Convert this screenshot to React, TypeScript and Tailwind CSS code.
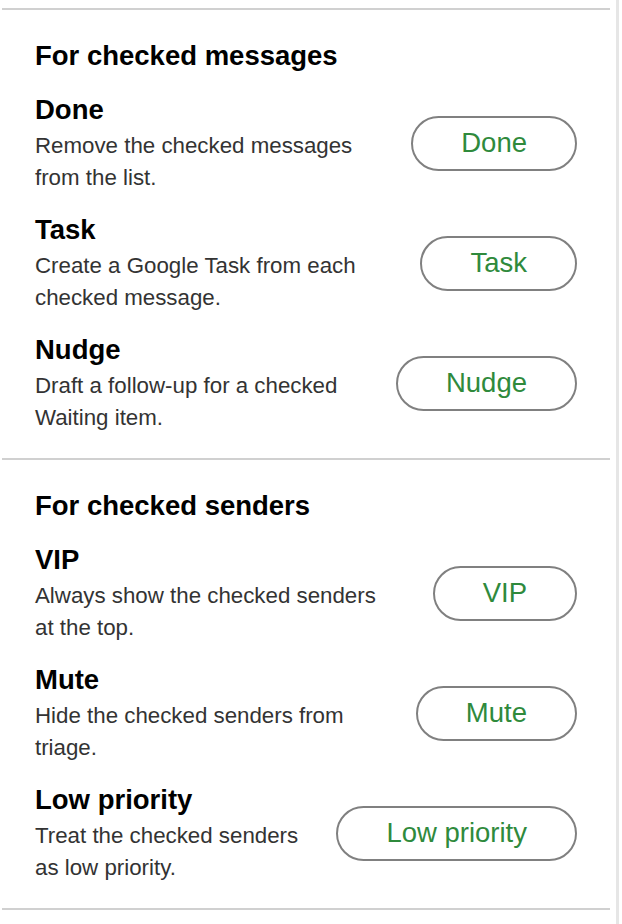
import React from 'react';

type Action = {
  title: string;
  description: string;
  label: string;
};

const messageActions: Action[] = [
  { title: 'Done', description: 'Remove the checked messages from the list.', label: 'Done' },
  { title: 'Task', description: 'Create a Google Task from each checked message.', label: 'Task' },
  { title: 'Nudge', description: 'Draft a follow-up for a checked Waiting item.', label: 'Nudge' },
];

const senderActions: Action[] = [
  { title: 'VIP', description: 'Always show the checked senders at the top.', label: 'VIP' },
  { title: 'Mute', description: 'Hide the checked senders from triage.', label: 'Mute' },
  { title: 'Low priority', description: 'Treat the checked senders as low priority.', label: 'Low priority' },
];

function ActionRow({ action }: { action: Action }) {
  return (
    <div className="flex items-center gap-[34px]">
      <div className="flex-1 min-w-0">
        <div className="text-[27.5px] leading-[36px] font-bold text-black mb-[2px]">{action.title}</div>
        <p className="text-[22.3px] leading-[32px] text-[#333333]">{action.description}</p>
      </div>
      <button
        type="button"
        className="shrink-0 h-[55px] px-[48px] rounded-full border-2 border-[#808080] bg-white text-[27.5px] leading-none text-[#2f8a3c]"
      >
        {action.label}
      </button>
    </div>
  );
}

function Section({ heading, actions }: { heading: string; actions: Action[] }) {
  return (
    <section className="px-[33px] pt-[28px] pb-[24px]">
      <h2 className="text-[27.5px] leading-[36px] font-bold text-black mb-[18px]">{heading}</h2>
      <div className="flex flex-col gap-[18px]">
        {actions.map((a) => (
          <ActionRow key={a.title} action={a} />
        ))}
      </div>
    </section>
  );
}

export default function App() {
  return (
    <div
      className="flex w-[622px] h-[924px] bg-white overflow-hidden"
      style={{ fontFamily: '"Liberation Sans", Arial, sans-serif' }}
    >
      <div className="w-[608px] ml-[2px] pt-[8px]">
        <div className="h-[2px] bg-[#d0d0d0]" />
        <Section heading="For checked messages" actions={messageActions} />
        <div className="h-[2px] bg-[#d0d0d0]" />
        <Section heading="For checked senders" actions={senderActions} />
        <div className="h-[2px] bg-[#d0d0d0]" />
      </div>
      <div className="ml-auto mr-[3px] w-[3px] h-full bg-[#e6e6e6]" />
    </div>
  );
}
